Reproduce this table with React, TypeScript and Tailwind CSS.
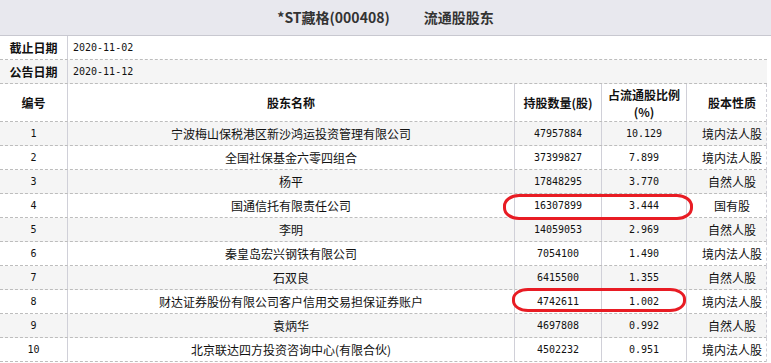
import React from 'react';

interface Holder {
  no: number;
  name: string;
  shares: string;
  ratio: string;
  kind: string;
}

const HOLDERS: Holder[] = [
  { no: 1, name: '宁波梅山保税港区新沙鸿运投资管理有限公司', shares: '47957884', ratio: '10.129', kind: '境内法人股' },
  { no: 2, name: '全国社保基金六零四组合', shares: '37399827', ratio: '7.899', kind: '境内法人股' },
  { no: 3, name: '杨平', shares: '17848295', ratio: '3.770', kind: '自然人股' },
  { no: 4, name: '国通信托有限责任公司', shares: '16307899', ratio: '3.444', kind: '国有股' },
  { no: 5, name: '李明', shares: '14059053', ratio: '2.969', kind: '自然人股' },
  { no: 6, name: '秦皇岛宏兴钢铁有限公司', shares: '7054100', ratio: '1.490', kind: '境内法人股' },
  { no: 7, name: '石双良', shares: '6415500', ratio: '1.355', kind: '自然人股' },
  { no: 8, name: '财达证券股份有限公司客户信用交易担保证券账户', shares: '4742611', ratio: '1.002', kind: '境内法人股' },
  { no: 9, name: '袁炳华', shares: '4697808', ratio: '0.992', kind: '自然人股' },
  { no: 10, name: '北京联达四方投资咨询中心(有限合伙)', shares: '4502232', ratio: '0.951', kind: '境内法人股' },
];

const cjk = 'font-["Noto_Sans_CJK_SC",sans-serif]';
const mono = 'font-["DejaVu_Sans_Mono","Liberation_Mono",monospace] text-[10px]';
const cols = 'grid grid-cols-[68px_447px_87px_85px_80px] w-[767px]';
const vline = 'border-r border-[#d0d0d8]';

export default function App() {
  return (
    <div className={`relative w-[771px] h-[363px] overflow-hidden bg-white text-[#111] ${cjk}`}>
      {/* title bar */}
      <div className="h-[36px] bg-[#e8e8ee] border-b border-[#c8c8d0] flex items-center justify-center gap-[34px] text-[14px] font-bold text-[#333]">
        <span>*ST藏格(000408)</span>
        <span>流通股股东</span>
      </div>

      {/* dates */}
      <div className="flex h-[24px] border-b border-dashed border-[#bdbdbd] w-[767px]">
        <div className={`w-[68px] ${vline} flex items-center justify-center text-[12px] font-bold`}>截止日期</div>
        <div className={`flex-1 flex items-center pl-[5px] ${mono}`}>2020-11-02</div>
      </div>
      <div className="flex h-[24px] border-b border-dashed border-[#bdbdbd] bg-[#f5f5f5] w-[767px]">
        <div className={`w-[68px] ${vline} flex items-center justify-center text-[12px] font-bold`}>公告日期</div>
        <div className={`flex-1 flex items-center pl-[5px] ${mono}`}>2020-11-12</div>
      </div>

      {/* column header */}
      <div className={`${cols} h-[38px] border-b border-dashed border-[#bdbdbd] text-[12px] font-bold border-r border-r-[#d0d0d8]`}>
        <div className={`${vline} flex items-center justify-center`}>编号</div>
        <div className={`${vline} flex items-center justify-center`}>股东名称</div>
        <div className={`${vline} flex items-center justify-center`}>持股数量(股)</div>
        <div className={`${vline} flex flex-col items-center justify-center leading-[17px]`}>
          <span>占流通股比例</span>
          <span>(%)</span>
        </div>
        <div className="flex items-center justify-center pl-[10px]">股本性质</div>
      </div>

      {/* rows */}
      {HOLDERS.map((h) => (
        <div
          key={h.no}
          className={`${cols} h-[24px] border-b border-dashed border-[#bdbdbd] border-r border-r-[#d0d0d8] text-[12px] ${
            h.no % 2 === 1 ? 'bg-[#f5f5f5]' : 'bg-white'
          }`}
        >
          <div className={`${vline} flex items-center justify-center ${mono}`}>{h.no}</div>
          <div className={`${vline} flex items-center justify-center whitespace-nowrap`}>{h.name}</div>
          <div className={`${vline} flex items-center justify-center ${mono}`}>{h.shares}</div>
          <div className={`${vline} flex items-center justify-center ${mono}`}>{h.ratio}</div>
          <div className="flex items-center justify-center pl-[10px]">{h.kind}</div>
        </div>
      ))}

      {/* hand-drawn highlights */}
      <div className="absolute left-[503px] top-[194px] w-[190px] h-[26px] border-[3px] border-[#e81c24] rounded-[16px/12px]" />
      <div className="absolute left-[512px] top-[288px] w-[174px] h-[24px] border-[3px] border-[#e81c24] rounded-[16px/11px]" />
    </div>
  );
}
